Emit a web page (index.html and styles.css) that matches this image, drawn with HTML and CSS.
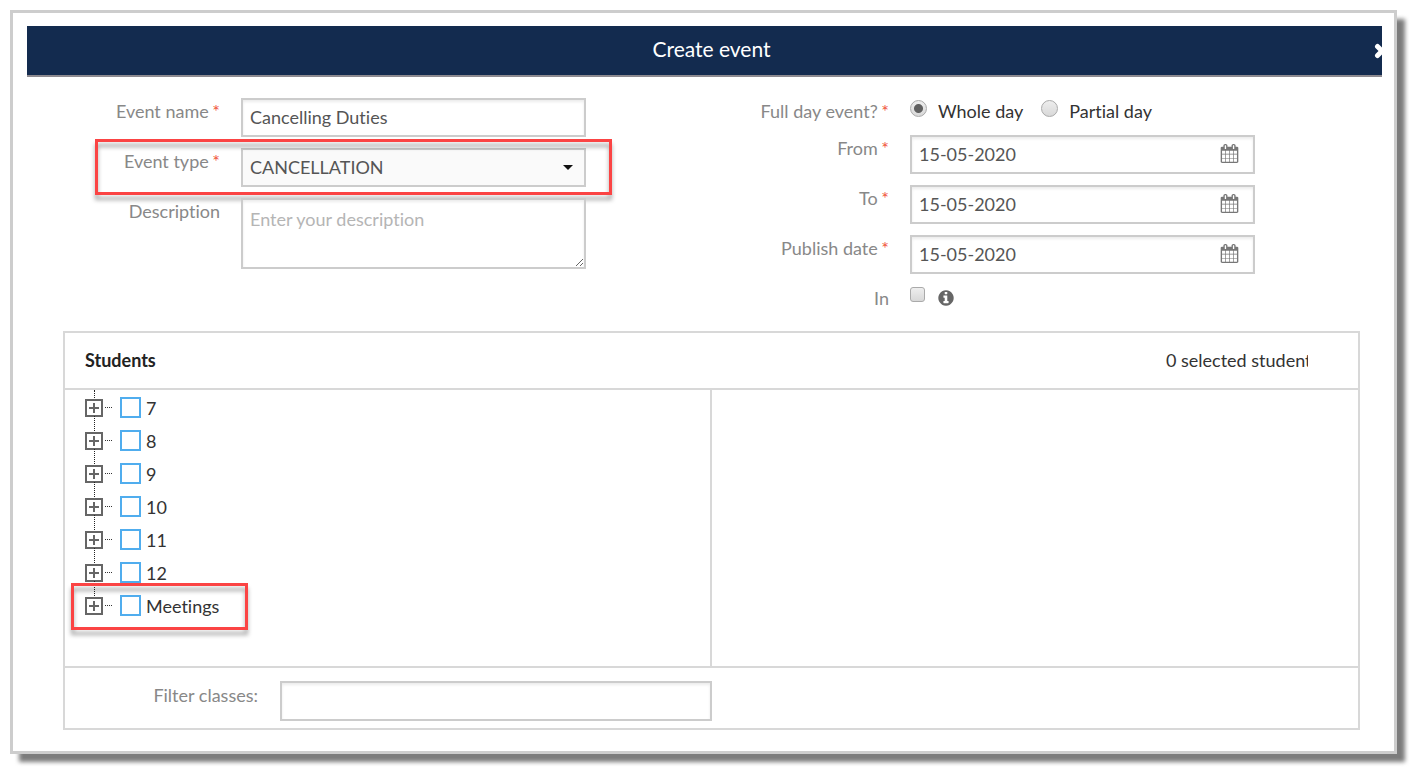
FILE: index.html
```html
<!DOCTYPE html>
<html lang="en">

<head>
    <meta charset="UTF-8">
    <meta name="viewport" content="width=device-width, initial-scale=1.0">
    <title>Create event</title>
    <link rel="stylesheet" href="styles.css">
</head>

<body>

    <!-- shared icons -->
    <svg class="sprite" width="0" height="0" aria-hidden="true">
        <symbol id="calendar" viewBox="0 0 1792 1792">
            <path d="M192 1664h288v-288h-288v288zm352 0h320v-288h-320v288zm-352-352h288v-320h-288v320zm352 0h320v-320h-320v320zm-352-384h288v-288h-288v288zm736 736h320v-288h-320v288zm-384-736h320v-288h-320v288zm768 736h288v-288h-288v288zm-384-352h320v-320h-320v320zm-352-864v-288q0-13-9.5-22.5t-22.500-9.500h-64q-13 0-22.500 9.500t-9.500 22.500v288q0 13 9.500 22.500t22.500 9.500h64q13 0 22.500-9.500t9.500-22.500zm736 864h288v-320h-288v320zm-384-384h320v-288h-320v288zm384 0h288v-288h-288v288zm32-480v-288q0-13-9.500-22.500t-22.500-9.500h-64q-13 0-22.500 9.500t-9.500 22.500v288q0 13 9.500 22.500t22.500 9.500h64q13 0 22.500-9.500t9.500-22.500zm384-64v1280q0 52-38 90t-90 38h-1408q-52 0-90-38t-38-90v-1280q0-52 38-90t90-38h128v-96q0-66 47-113t113-47h64q66 0 113 47t47 113v96h384v-96q0-66 47-113t113-47h64q66 0 113 47t47 113v96h128q52 0 90 38t38 90z"/>
        </symbol>
    </svg>

    <div class="modal">
        <div class="modal-header">
            <h1>Create event</h1>
            <button type="button" class="close" aria-label="Close">
                <svg width="16" height="16" viewBox="0 0 16 16"><path d="M3.500 3.500L12.500 12.500M12.500 3.500L3.500 12.500"/></svg>
            </button>
        </div>

        <form>
            <div class="columns">
                <div class="column">
                    <div class="row">
                        <label for="name">Event name <sup>*</sup></label>
                        <input type="text" class="field" id="name" value="Cancelling Duties">
                    </div>
                    <div class="row marked">
                        <label for="type">Event type <sup>*</sup></label>
                        <div class="control">
                            <select class="field" id="type">
                                <option>CANCELLATION</option>
                            </select>
                            <svg class="caret" width="10" height="5" viewBox="0 0 10 5"><path d="M0 0h10L5 5z"/></svg>
                        </div>
                    </div>
                    <div class="row">
                        <label for="description">Description</label>
                        <textarea class="field" id="description" placeholder="Enter your description"></textarea>
                    </div>
                </div>

                <div class="column">
                    <div class="row" role="radiogroup" aria-labelledby="full-day">
                        <span class="label" id="full-day">Full day event? <sup>*</sup></span>
                        <div class="choices">
                            <label><input type="radio" name="day" checked>Whole day</label>
                            <label><input type="radio" name="day">Partial day</label>
                        </div>
                    </div>
                    <div class="row">
                        <label for="from">From <sup>*</sup></label>
                        <div class="control">
                            <input type="text" class="field" id="from" value="15-05-2020">
                            <svg class="calendar"><use href="#calendar"/></svg>
                        </div>
                    </div>
                    <div class="row">
                        <label for="to">To <sup>*</sup></label>
                        <div class="control">
                            <input type="text" class="field" id="to" value="15-05-2020">
                            <svg class="calendar"><use href="#calendar"/></svg>
                        </div>
                    </div>
                    <div class="row">
                        <label for="publish">Publish date <sup>*</sup></label>
                        <div class="control">
                            <input type="text" class="field" id="publish" value="15-05-2020">
                            <svg class="calendar"><use href="#calendar"/></svg>
                        </div>
                    </div>
                    <div class="row">
                        <label for="in">In</label>
                        <div class="choices">
                            <input type="checkbox" class="small-check" id="in">
                            <svg class="info" viewBox="0 0 1792 1792"><path d="M1152 1376v-160q0-14-9-23t-23-9h-96v-512q0-14-9-23t-23-9h-320q-14 0-23 9t-9 23v160q0 14 9 23t23 9h96v320h-96q-14 0-23 9t-9 23v160q0 14 9 23t23 9h448q14 0 23-9t9-23zm-128-896v-160q0-14-9-23t-23-9h-192q-14 0-23 9t-9 23v160q0 14 9 23t23 9h192q14 0 23-9t9-23zm640 416q0 209-103 385.500t-279.500 279.500-385.500 103-385.500-103-279.500-279.500-103-385.500 103-385.500 279.500-279.500 385.500-103 385.500 103 279.500 279.500 103 385.500z"/></svg>
                        </div>
                    </div>
                </div>
            </div>

            <div class="students">
                <div class="students-header">
                    <h2>Students</h2>
                    <span class="count">0 selected student</span>
                </div>
                <div class="panels">
                    <ul class="tree">
                        <li><button type="button" class="toggle" aria-label="Expand 7"></button><label><input type="checkbox">7</label></li>
                        <li><button type="button" class="toggle" aria-label="Expand 8"></button><label><input type="checkbox">8</label></li>
                        <li><button type="button" class="toggle" aria-label="Expand 9"></button><label><input type="checkbox">9</label></li>
                        <li><button type="button" class="toggle" aria-label="Expand 10"></button><label><input type="checkbox">10</label></li>
                        <li><button type="button" class="toggle" aria-label="Expand 11"></button><label><input type="checkbox">11</label></li>
                        <li><button type="button" class="toggle" aria-label="Expand 12"></button><label><input type="checkbox">12</label></li>
                        <li class="marked"><button type="button" class="toggle" aria-label="Expand Meetings"></button><label><input type="checkbox">Meetings</label></li>
                    </ul>
                    <div class="selected"></div>
                </div>
                <div class="filter">
                    <label for="filter">Filter classes:</label>
                    <input type="text" class="field" id="filter">
                </div>
            </div>
        </form>
    </div>

</body>

</html>
```
FILE: styles.css
```css
* {
    box-sizing: border-box;
}

html {
    background: white;
}

body {
    margin: 0;
    padding: 10px 17px 16px 10px;
    font-family: Lato, sans-serif;
    font-size: 18px;
    font-variant-ligatures: none;
    line-height: 26px;
    color: #333;
}

.sprite {
    position: absolute;
}

.modal {
    position: relative;
    padding: 13px 12px 21px 14px;
    border: 3px solid #cdcdcd;
    background: white;
}

/* soft shadow below and to the right */
.modal::before {
    content: "";
    position: absolute;
    z-index: -1;
    inset: 6px -11px -11px 6px;
    background: #7c7c7c;
    filter: blur(2px);
}

.modal-header {
    display: flex;
    align-items: center;
    height: 51px;
    padding-left: 22px;
    overflow: hidden;
    background: #132b4f;
    border-bottom: 2px solid #8d8a90;
}

h1 {
    flex: 1;
    margin: 0;
    padding-bottom: 3px;
    color: white;
    font-size: 21px;
    font-weight: 400;
    text-align: center;
}

.close {
    display: flex;
    flex: none;
    margin-right: -8px;
    padding: 0;
    border: none;
    background: none;
    cursor: pointer;
}

.close path {
    stroke: white;
    stroke-width: 5;
    stroke-linecap: round;
}

.columns {
    display: grid;
    grid-template-columns: 1fr 1fr;
    padding: 21px 17px 20px 0;
}

.column {
    display: flex;
    flex-direction: column;
    gap: 11px;
}

.row {
    position: relative;
    display: grid;
    grid-template-columns: 193fr 345fr 89fr;
    column-gap: 21px;
    align-items: start;
}

.row > label,
.label,
.filter label {
    color: #888;
    text-align: right;
}

sup {
    margin-left: -1px;
    color: #f0553c;
    font-size: 18px;
    line-height: 0;
    vertical-align: 0;
}

.field {
    display: block;
    width: 100%;
    height: 39px;
    margin: 0;
    padding: 0 7px 2px;
    border: 2px solid #ccc;
    border-radius: 0;
    background: white;
    box-shadow: inset 0 2px 3px rgba(0, 0, 0, 0.08);
    color: #555;
    font-family: inherit;
    font-size: 18px;
    font-variant-ligatures: none;
}

textarea.field {
    height: 71px;
    padding-top: 6px;
    line-height: 26px;
    resize: vertical;
}

.field::placeholder {
    color: #b5b5b5;
}

select.field {
    appearance: none;
    background: #fafafa;
    box-shadow: none;
}

.control {
    position: relative;
}

.caret {
    position: absolute;
    top: 17px;
    right: 13px;
    fill: #111;
    pointer-events: none;
}

.calendar {
    position: absolute;
    top: 9px;
    right: 16px;
    width: 19px;
    height: 19px;
    fill: #777;
}

.choices {
    display: flex;
    gap: 18px;
}

.choices label {
    display: flex;
    gap: 11px;
    white-space: nowrap;
}

input[type="radio"],
.small-check {
    appearance: none;
    flex: none;
    width: 17px;
    height: 17px;
    margin: 2px 0 0;
    border: 1px solid #aaa;
    border-radius: 50%;
    background: linear-gradient(#eee, #d8d8d8);
}

input[type="radio"]:checked {
    background: radial-gradient(circle, #606060 4px, transparent 5px), linear-gradient(#eee, #d8d8d8);
}

.small-check {
    width: 15px;
    height: 15px;
    border-radius: 3px;
}

.info {
    width: 18px;
    height: 18px;
    margin: 4px 0 0 -6px;
    fill: #666;
}

.students {
    margin: 0 22px 0 36px;
    border: 2px solid #d8d8d8;
}

.students-header {
    display: flex;
    justify-content: space-between;
    padding: 14px 50px 15px 20px;
    border-bottom: 2px solid #d8d8d8;
}

h2 {
    margin: 0;
    color: #222;
    font-size: 18px;
    font-weight: 700;
}

/* fixed width, a longer count is cut at the edge */
.count {
    width: 142px;
    overflow: hidden;
    white-space: nowrap;
}

.panels {
    display: grid;
    grid-template-columns: 1fr 1fr;
    min-height: 278px;
    border-bottom: 2px solid #d8d8d8;
}

.tree {
    margin: 0;
    padding: 1px 0 0 20px;
    border-right: 2px solid #d8d8d8;
    list-style: none;
}

.tree li {
    position: relative;
    display: flex;
    align-items: center;
    width: max-content;
    height: 33px;
}

/* dotted line down to each node */
.tree li::before {
    content: "";
    position: absolute;
    left: 9px;
    top: -8px;
    height: 15px;
    border-left: 1px dotted #222;
}

.tree li:first-child::before {
    top: -1px;
    height: 8px;
}

.toggle {
    width: 18px;
    height: 18px;
    padding: 0;
    border: 2px solid #666;
    background:
        linear-gradient(#666, #666) center / 10px 2px no-repeat,
        linear-gradient(#666, #666) center / 2px 10px no-repeat,
        white;
}

.toggle::after {
    content: "";
    position: absolute;
    left: 20px;
    top: 16px;
    width: 7px;
    border-top: 1px dotted #333;
}

.tree label {
    display: flex;
    align-items: center;
    gap: 5px;
    margin-left: 17px;
}

.tree input {
    appearance: none;
    width: 21px;
    height: 21px;
    margin: 0;
    border: 2px solid #50adee;
    background: white;
}

.filter {
    display: flex;
    gap: 22px;
    width: 50%;
    padding: 13px 0 7px;
}

.filter label {
    flex: none;
    width: 193px;
    padding-top: 1px;
}

.filter .field {
    flex: 1;
    height: 40px;
}

/* red outline around the important rows */
.marked::after {
    content: "";
    position: absolute;
    inset: -9px 84px -8px 68px;
    border: 3px solid #fb4444;
    filter: drop-shadow(0 5px 2px rgba(0, 0, 0, 0.35));
    pointer-events: none;
}

.tree .marked::after {
    inset: -6px -29px -8px -14px;
}
```
